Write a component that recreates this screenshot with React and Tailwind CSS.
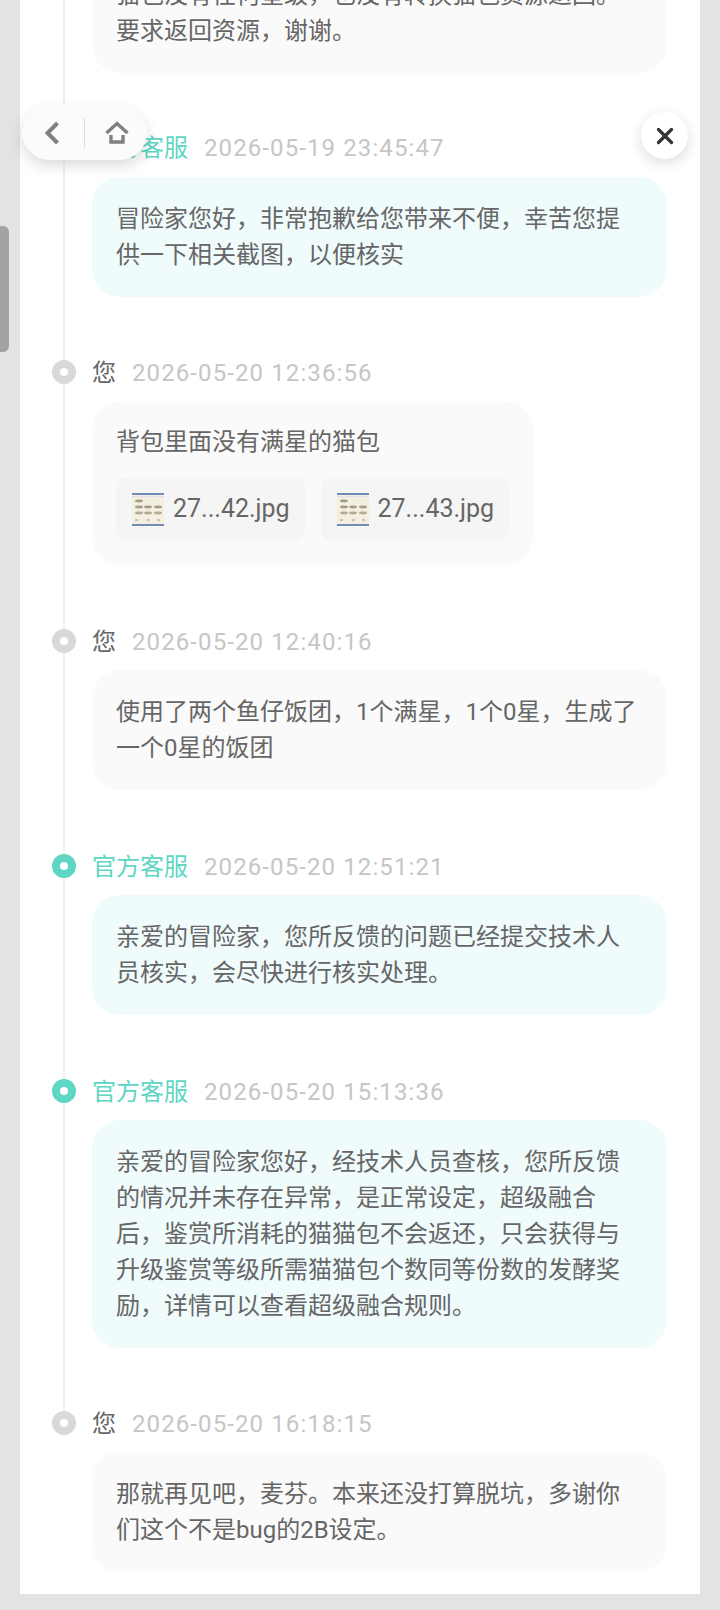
import { X } from 'lucide-react'

const font = { fontFamily: '"Roboto", "Noto Sans CJK SC", sans-serif' }

const messages = [
  { name: '您', tight: true, time: '2026-05-20 12:36:56', text: '背包里面没有满星的猫包', files: ['27...42.jpg', '27...43.jpg'] },
  { name: '您', time: '2026-05-20 12:40:16', text: '使用了两个鱼仔饭团，1个满星，1个0星，生成了一个0星的饭团' },
  { name: '官方客服', official: true, time: '2026-05-20 12:51:21', text: '亲爱的冒险家，您所反馈的问题已经提交技术人员核实，会尽快进行核实处理。' },
  { name: '官方客服', official: true, time: '2026-05-20 15:13:36', text: '亲爱的冒险家您好，经技术人员查核，您所反馈的情况并未存在异常，是正常设定，超级融合后，鉴赏所消耗的猫猫包不会返还，只会获得与升级鉴赏等级所需猫猫包个数同等份数的发酵奖励，详情可以查看超级融合规则。' },
  { name: '您', tight: true, time: '2026-05-20 16:18:15', text: '那就再见吧，麦芬。本来还没打算脱坑，多谢你们这个不是bug的2B设定。' },
]

function Thumb() {
  return (
    <svg width="32" height="33" viewBox="0 0 32 33" className="shrink-0">
      <rect width="32" height="33" fill="#f5efdf" />
      <rect width="32" height="2" fill="#6f8db8" />
      <rect y="31" width="32" height="2" fill="#6f8db8" />
      <rect x="0" y="3" width="32" height="1" fill="#dfe3e6" />
      <ellipse cx="7" cy="8" rx="4" ry="1.4" fill="#a39c88" />
      <ellipse cx="7" cy="14" rx="4" ry="1.4" fill="#a39c88" />
      <ellipse cx="16" cy="14" rx="4" ry="1.4" fill="#a39c88" />
      <ellipse cx="26" cy="14" rx="4" ry="1.4" fill="#a39c88" />
      <ellipse cx="7" cy="20" rx="4" ry="1.4" fill="#b3ab96" />
      <ellipse cx="16" cy="20" rx="4" ry="1.4" fill="#b3ab96" />
      <ellipse cx="26" cy="20" rx="4" ry="1.4" fill="#b3ab96" />
      <rect x="3" y="26" width="3" height="2" fill="#c3c4c0" />
      <rect x="15" y="26" width="3" height="2" fill="#c3c4c0" />
      <rect x="25" y="26" width="3" height="2" fill="#c3c4c0" />
    </svg>
  )
}

function Message({ name, time, text, official, files, tight }) {
  return (
    <div className={`relative ${tight ? 'mt-[63px]' : 'mt-[64px]'}`}>
      <div className="flex items-center h-[26px] gap-[16px]">
        <div className={`absolute left-[-40px] top-0 w-[24px] h-[24px] rounded-full border-[8px] bg-white ${official ? 'border-[#5dd6c4]' : 'border-[#d9d9d9]'}`} />
        <span className={`text-[24px] leading-[26px] ${official ? 'text-[#5dd6c4]' : 'text-[#666666]'}`}>{name}</span>
        <span className="text-[24px] leading-[26px] tracking-[1.1px] text-[#c6c6c6]">{time}</span>
      </div>
      <div className={`mt-[15px] rounded-[28px] px-[24px] text-[24px] leading-[36px] text-[#666666] ${official ? 'bg-[#f0fbfc]' : 'bg-[#fafafa]'} ${files ? 'w-[441px] pt-[23px] pb-[24px]' : 'w-[575px] py-[24px]'}`}>
        <p>{text}</p>
        {files && (
          <div className="flex gap-[16px] mt-[17px]">
            {files.map((f) => (
              <div key={f} className="flex items-center gap-[9px] h-[64px] w-[190px] pl-[16px] rounded-[10px] bg-[#f5f5f5]">
                <Thumb />
                <span className="text-[25px] leading-none pb-[2px]">{f}</span>
              </div>
            ))}
          </div>
        )}
      </div>
    </div>
  )
}

export default function App() {
  return (
    <div className="relative h-[1610px] overflow-hidden bg-[#e3e3e3]" style={font}>
      <div className="relative mx-[20px] h-[1594px] w-[680px] overflow-hidden bg-white pl-[72px]">
        <div className="absolute left-[43px] top-0 h-[1420px] w-[2px] bg-[#f2f2f2]" />
        <div className="relative mt-[-47px] w-[575px] rounded-[28px] bg-[#fafafa] px-[24px] py-[24px] text-[24px] leading-[36px] text-[#666666] whitespace-nowrap">
          <p>猫包没有任何星级，也没有转换猫包资源返回。</p>
          <p>要求返回资源，谢谢。</p>
        </div>
        <div className="relative">
          <div className="relative mt-[62px]">
            <div className="flex items-center h-[26px] gap-[16px]">
              <div className="absolute left-[-40px] top-0 w-[24px] h-[24px] rounded-full border-[8px] bg-white border-[#5dd6c4]" />
              <span className="text-[24px] leading-[26px] text-[#5dd6c4]">官方客服</span>
              <span className="text-[24px] leading-[26px] tracking-[1.1px] text-[#c6c6c6]">2026-05-19 23:45:47</span>
            </div>
            <div className="mt-[16px] w-[575px] rounded-[28px] bg-[#f0fbfc] px-[24px] py-[24px] text-[24px] leading-[36px] text-[#666666]">
              冒险家您好，非常抱歉给您带来不便，幸苦您提供一下相关截图，以便核实
            </div>
          </div>
          {messages.map((m) => (
            <Message key={m.time} {...m} />
          ))}
        </div>
      </div>

      <div className="absolute left-0 top-[226px] h-[126px] w-[9px] rounded-r-[6px] bg-[#a3a3a3]" />

      <div className="absolute left-[22px] top-[105px] flex h-[55px] w-[125px] items-center rounded-[28px] bg-[#fbfbfb] shadow-[0_6px_14px_rgba(0,0,0,0.14)]">
        <svg width="20" height="30" viewBox="0 0 20 30" className="ml-[20px]" fill="none" stroke="#808080" strokeWidth="4" strokeLinejoin="miter">
          <path d="M15.5 5 L5.5 15 L15.5 25" />
        </svg>
        <div className="ml-[22px] h-[30px] w-[1px] bg-[#dddddd]" />
        <svg width="24" height="24" viewBox="0 0 24 24" className="ml-[20px]" fill="none" stroke="#808080" strokeWidth="3.4">
          <path d="M1.5 12 L12 2.5 L22.5 12" />
          <path d="M6 14 V21 H18 V14" />
        </svg>
      </div>

      <div className="absolute left-[641px] top-[112px] flex h-[47px] w-[47px] items-center justify-center rounded-full bg-white shadow-[0_4px_14px_rgba(0,0,0,0.14)]">
        <X size={26} color="#333333" strokeWidth={3} />
      </div>
    </div>
  )
}
